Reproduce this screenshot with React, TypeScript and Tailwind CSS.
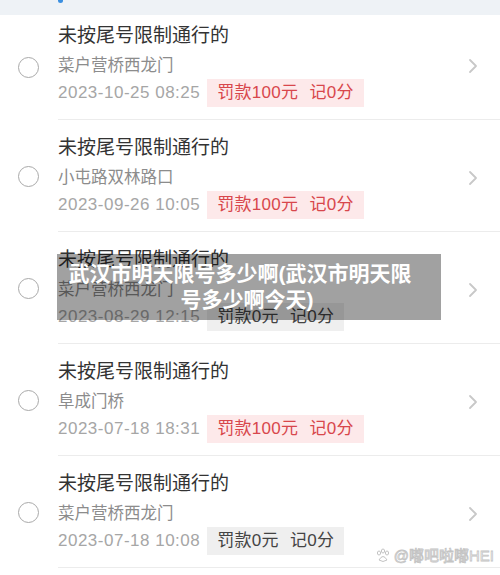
import React from "react";

type Item = {
  place: string;
  date: string;
  fine: string;
  red: boolean;
};

const items: Item[] = [
  { place: "菜户营桥西龙门", date: "2023-10-25 08:25", fine: "罚款100元", red: true },
  { place: "小屯路双林路口", date: "2023-09-26 10:05", fine: "罚款100元", red: true },
  { place: "菜户营桥西龙门", date: "2023-08-29 12:15", fine: "罚款0元", red: false },
  { place: "阜成门桥", date: "2023-07-18 18:31", fine: "罚款100元", red: true },
  { place: "菜户营桥西龙门", date: "2023-07-18 10:08", fine: "罚款0元", red: false },
];

const FONT = { fontFamily: '"Liberation Sans", "Noto Sans CJK SC", sans-serif' };

function Row({ item, first }: { item: Item; first: boolean }) {
  return (
    <div className="flex">
      <div className="w-[58px] flex items-center justify-center shrink-0">
        <div className="w-[21px] h-[21px] rounded-full border-[1.5px] border-[#a9a9a9] ml-[-2px]" />
      </div>
      <div
        className={`flex-1 flex items-center border-b border-[#ececec] pb-[12px] pr-[22px] ${
          first ? "pt-[10px]" : "pt-[17px]"
        }`}
      >
        <div className="flex-1 flex flex-col">
          <div className="h-[22px] leading-[22px] text-[19px] text-[#333333]">未按尾号限制通行的</div>
          <div className="h-[22px] leading-[22px] mt-[7px] text-[16.5px] text-[#8c8c8c]">{item.place}</div>
          <div className="flex items-center mt-[3px] h-[28px]">
            <span className="text-[17px] text-[#a6a6a6] tracking-[0.5px]">{item.date}</span>
            <span
              className={`ml-[7px] h-[28px] flex items-center px-[10px] text-[17px] tracking-[0.3px] ${
                item.red ? "bg-[#fde9ea] text-[#d8474c]" : "bg-[#efefef] text-[#444444]"
              }`}
            >
              {item.fine}
              <span className="ml-[11px]">记0分</span>
            </span>
          </div>
        </div>
        <svg width="10" height="16" viewBox="0 0 10 16" className="shrink-0">
          <path d="M2 2 L8 8 L2 14" fill="none" stroke="#c8c8c8" strokeWidth="1.8" strokeLinecap="round" strokeLinejoin="round" />
        </svg>
      </div>
    </div>
  );
}

export default function App() {
  return (
    <div className="relative w-[500px] h-[575px] overflow-hidden bg-white" style={FONT}>
      <div className="h-[15px] bg-[#eef2f6] relative">
        <div className="absolute left-[58px] top-0 w-[5px] h-[3px] rounded-b-full bg-[#3b8fe0]" />
      </div>
      {items.map((it, i) => (
        <Row key={i} item={it} first={i === 0} />
      ))}

      <div className="absolute left-[57px] top-[254px] w-[384px] h-[66px] bg-[rgba(0,0,0,0.37)] flex flex-col items-center justify-center">
        <div className="text-white font-bold text-[21px] leading-[26px] text-center mr-[18px]">
          武汉市明天限号多少啊(武汉市明天限
        </div>
        <div className="text-white font-bold text-[21px] leading-[26px] text-center mr-[4px]">号多少啊今天)</div>
      </div>

      <div
        className="absolute right-[6px] top-[545px] flex items-center text-[15px] text-transparent"
        style={{ WebkitTextStroke: "0.8px #c4c4c4" }}
      >
        <svg width="16" height="16" viewBox="0 0 16 16" className="mr-[3px]">
          <g fill="none" stroke="#c4c4c4" strokeWidth="1">
            <ellipse cx="4" cy="5" rx="1.6" ry="2" />
            <ellipse cx="12" cy="5" rx="1.6" ry="2" />
            <ellipse cx="8" cy="3" rx="1.6" ry="2" />
            <path d="M4 12 Q8 5 12 12 Q8 15 4 12 Z" />
          </g>
        </svg>
        <span>@嘟吧啦嘟HEI</span>
      </div>
    </div>
  );
}
